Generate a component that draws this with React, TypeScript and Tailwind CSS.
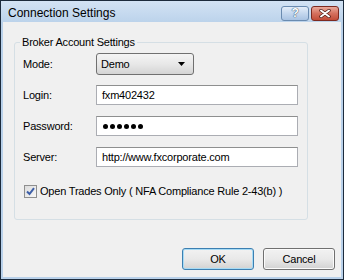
import React from "react";

function Field({ label, children }: { label: string; children: React.ReactNode }) {
    return (
        <div className="flex items-center h-[20px]">
            <span className="w-[73px]">{label}</span>
            {children}
        </div>
    );
}

export default function App() {
    return (
        <div className="w-[344px] h-[280px] flex flex-col border border-[#1c2b3c] bg-[#b9d1ea] font-['Liberation_Sans',Arial,sans-serif] text-[11px] tracking-[-0.2px] text-black select-none">
            {/* title bar */}
            <div className="h-[21px] flex items-center bg-gradient-to-b from-[#d3e3f4] to-[#bcd3eb] pl-[7px] pr-[4px]">
                <span className="text-[12px] tracking-normal mt-[2px]">Connection Settings</span>
                <div className="ml-auto flex gap-[2px] mt-[3px]">
                    <div className="w-[28px] h-[15px] rounded-[3px] border border-[#6a8bb0] bg-gradient-to-b from-[#e4eef9] via-[#c4d7ee] to-[#a9c3e2] flex items-center justify-center">
                        <span className="text-white font-bold text-[12px] leading-none [text-shadow:0_0_1px_#27415f,0_0_1px_#27415f]">?</span>
                    </div>
                    <div className="w-[28px] h-[15px] rounded-[3px] border border-[#7d2a20] bg-gradient-to-b from-[#e9a99b] via-[#d4705e] to-[#c24c38] flex items-center justify-center">
                        <svg width="12" height="9" viewBox="0 0 12 9">
                            <path d="M2 1.5 L10 7.5 M10 1.5 L2 7.5" stroke="#4a1a14" strokeWidth="3.4" strokeLinecap="round" />
                            <path d="M2 1.5 L10 7.5 M10 1.5 L2 7.5" stroke="#ffffff" strokeWidth="2" strokeLinecap="round" />
                        </svg>
                    </div>
                </div>
            </div>

            {/* client */}
            <div className="flex-1 flex flex-col mx-[2px] mb-[2px] bg-[#f0f0f0]">
                <fieldset className="mt-[14px] ml-[11px] w-[294px] h-[184px] border border-[#d5dfe5] rounded-[3px] pl-[8px] pr-[9px] pt-[4px]">
                    <legend className="-ml-[3px] px-[2px] leading-[13px]">Broker Account Settings</legend>
                    <div className="flex flex-col">
                        <div className="flex items-center h-[22px]">
                            <span className="w-[73px]">Mode:</span>
                            <div className="w-[98px] h-[22px] rounded-[3px] border border-[#707070] bg-gradient-to-b from-[#f4f4f4] via-[#e8e8e8] to-[#d4d4d4] flex items-center pl-[4px] pr-[8px]">
                                <span>Demo</span>
                                <svg className="ml-auto" width="7" height="4" viewBox="0 0 7 4">
                                    <path d="M0 0 H7 L3.5 4 Z" fill="#000" />
                                </svg>
                            </div>
                        </div>
                        <div className="mt-[10px]">
                            <Field label="Login:">
                                <div className="flex-1 h-[20px] border border-[#abadb3] border-t-[#8e8f8f] bg-white flex items-center pl-[5px]">fxm402432</div>
                            </Field>
                        </div>
                        <div className="mt-[11px]">
                            <Field label="Password:">
                                <div className="flex-1 h-[20px] border border-[#abadb3] border-t-[#8e8f8f] bg-white flex items-center pl-[6px] gap-[2px]">
                                    <span className="w-[5px] h-[5px] rounded-full bg-black" />
                                    <span className="w-[5px] h-[5px] rounded-full bg-black" />
                                    <span className="w-[5px] h-[5px] rounded-full bg-black" />
                                    <span className="w-[5px] h-[5px] rounded-full bg-black" />
                                    <span className="w-[5px] h-[5px] rounded-full bg-black" />
                                    <span className="w-[5px] h-[5px] rounded-full bg-black" />
                                </div>
                            </Field>
                        </div>
                        <div className="mt-[11px]">
                            <Field label="Server:">
                                <div className="flex-1 h-[20px] border border-[#abadb3] border-t-[#8e8f8f] bg-white flex items-center pl-[5px]">http://www.fxcorporate.com</div>
                            </Field>
                        </div>
                        <div className="mt-[16px] flex items-center ml-[1px]">
                            <div className="w-[13px] h-[13px] border border-[#8f8f8f] bg-gradient-to-br from-[#dcdcdc] to-[#f8f8f8] flex items-center justify-center">
                                <svg width="9" height="9" viewBox="0 0 9 9">
                                    <path d="M1 4.5 L3.5 7 L8 1.2" fill="none" stroke="#3d5fa8" strokeWidth="2" />
                                </svg>
                            </div>
                            <span className="ml-[3px]">Open Trades Only ( NFA Compliance Rule 2-43(b) )</span>
                        </div>
                    </div>
                </fieldset>

                <div className="mt-auto mb-[7px] mr-[6px] flex justify-end gap-[9px]">
                    <button className="w-[72px] h-[22px] rounded-[3px] border border-[#3c7fb1] shadow-[inset_0_0_0_1px_#a7dbf5] bg-gradient-to-b from-[#f2f2f2] via-[#e9e9e9] to-[#d2d2d2]">OK</button>
                    <button className="w-[72px] h-[22px] rounded-[3px] border border-[#707070] shadow-[inset_0_0_0_1px_#fbfbfb] bg-gradient-to-b from-[#f2f2f2] via-[#e9e9e9] to-[#d2d2d2]">Cancel</button>
                </div>
            </div>
        </div>
    );
}
